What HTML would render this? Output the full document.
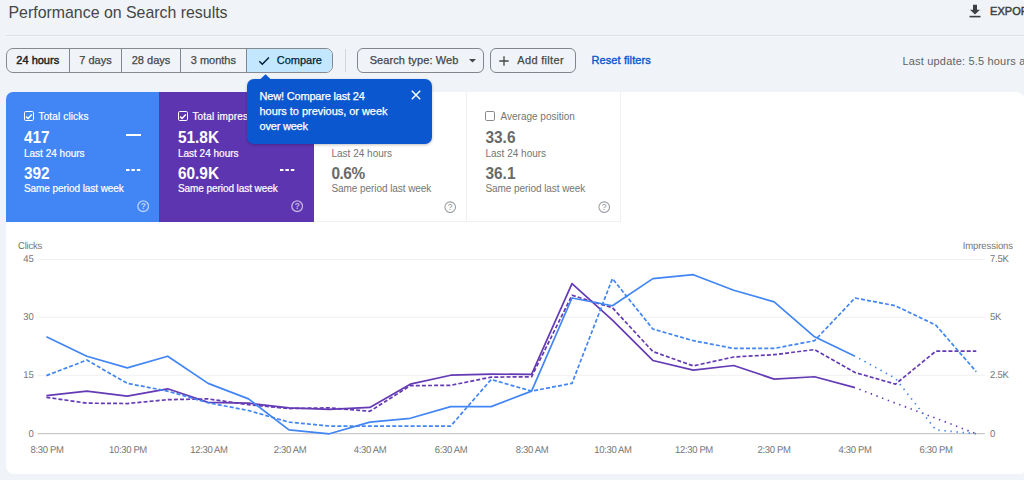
<!DOCTYPE html>
<html><head><meta charset="utf-8">
<style>
*{box-sizing:border-box;margin:0;padding:0}
html,body{width:1024px;height:480px;overflow:hidden}
body{background:#f0f4f9;font-family:"Liberation Sans",sans-serif;position:relative;color:#444746}
.abs{position:absolute;white-space:nowrap}
#title{left:8.5px;top:3px;font-size:15.9px;line-height:20px;color:#444746}
#hr{left:5.5px;top:35px;width:1019px;height:2px;background:linear-gradient(#dcdfe4 0 50%,#f4f7fb 50% 100%)}
#seg{left:5.5px;top:48px;width:327px;height:25px;border:1px solid #858a8f;border-radius:7px;overflow:hidden;background:#f0f4f9}
.sg{-webkit-text-stroke:0.25px currentColor;position:absolute;top:0;height:23px;line-height:23px;font-size:11px;text-align:center;color:#444746;border-right:1px solid #80868b}
.btn{-webkit-text-stroke:0.25px currentColor;position:absolute;top:48px;height:25px;border:1px solid #80868b;border-radius:6px;font-size:11px;line-height:23px;color:#444746}
#chartcard{left:5.5px;top:92px;width:1019px;height:382.4px;background:#fff;border-radius:8px 9px 5px 8px}
.card{position:absolute;top:92px;height:129.5px}
.card .lbl{position:absolute;font-size:10px;line-height:12px;margin-top:0.6px;white-space:nowrap}
.card .num{position:absolute;font-size:15.4px;line-height:16px;margin-top:0.9px;transform:scale(1.0,1.06);transform-origin:left bottom;font-weight:bold;white-space:nowrap}
.cb{position:absolute;width:10px;height:10px;border:1.25px solid #fff;border-radius:1.8px;margin-top:-0.5px;margin-left:-0.2px}
.help{position:absolute;width:12.4px;height:12.4px}
.yl{transform:rotate(0.03deg) scaleY(1.05);transform-origin:50% 82%;position:absolute;font-size:9.5px;line-height:10px;color:#757575;white-space:nowrap;letter-spacing:-0.2px}
.xl{transform:rotate(0.03deg) scaleY(1.05);transform-origin:50% 82%;position:absolute;top:444.9px;width:60px;text-align:center;font-size:9.5px;line-height:10px;color:#757575;white-space:nowrap;letter-spacing:-0.35px}
.wc .num{color:#696969}
.cc .lbl{-webkit-text-stroke:0.2px #fff}
</style></head><body>
<div id="title" class="abs">Performance on Search results</div>
<svg class="abs" style="left:969px;top:4px" width="12" height="14" viewBox="0 0 12 14"><path d="M4 0.8h4v5h3L6 10.6 1 5.8h3z" fill="#3c4043"/><rect x="0.5" y="11.8" width="11" height="1.6" fill="#3c4043"/></svg>
<div class="abs" style="left:990px;top:5px;font-size:11px;line-height:13px;color:#3c4043;letter-spacing:0.05px;-webkit-text-stroke:0.45px #3c4043">EXPORT</div>
<div id="hr" class="abs"></div>

<div id="seg" class="abs">
 <div class="sg" style="left:0;width:63.5px;color:#1f1f1f;-webkit-text-stroke:0.45px currentColor">24 hours</div>
 <div class="sg" style="left:63.5px;width:52px">7 days</div>
 <div class="sg" style="left:115.5px;width:59px">28 days</div>
 <div class="sg" style="left:174.5px;width:65.7px">3 months</div>
 <div class="sg" style="left:240.2px;width:86.8px;background:#c2e7ff;color:#001d35;border-right:none;text-align:left;padding-left:30px">Compare</div>
 <svg style="position:absolute;left:251px;top:7px" width="14" height="10" viewBox="0 0 14 10"><path d="M1.3 5.3 L4.3 8.2 L10.9 1.4" fill="none" stroke="#001d35" stroke-width="1.45"/></svg>
</div>
<div class="abs" style="left:345px;top:49px;width:1px;height:23px;background:#d3d7dc"></div>
<div class="btn" style="left:357px;width:127px;padding-left:11.7px;letter-spacing:0.09px">Search type: Web
 <svg style="position:absolute;left:111px;top:10px" width="7" height="4" viewBox="0 0 7 4"><path d="M0 0h7L3.5 3.6z" fill="#444746"/></svg></div>
<div class="btn" style="left:490px;width:86px;padding-left:26.3px;letter-spacing:0.32px">Add filter
 <svg style="position:absolute;left:8px;top:6.5px" width="10" height="10" viewBox="0 0 10 10"><path d="M5 0.3v9.4M0.3 5h9.4" stroke="#444746" stroke-width="1.3"/></svg></div>
<div class="abs" style="left:591.5px;top:54px;font-size:11px;line-height:13px;color:#0b57d0;letter-spacing:0.1px;-webkit-text-stroke:0.4px currentColor">Reset filters</div>
<div class="abs" style="left:902.5px;top:54.8px;font-size:11px;line-height:13px;color:#5f6368;letter-spacing:0.18px">Last update: 5.5 hours ago</div>

<div id="chartcard" class="abs"></div>

<!-- cards -->
<div class="card cc" style="left:5.5px;width:153.6px;background:#4285f4;border-radius:7px 0 0 0;color:#fff">
 <div class="cb" style="left:18.5px;top:19.5px"></div>
 <svg style="position:absolute;left:19.5px;top:20.5px" width="8" height="8" viewBox="0 0 8 8"><path d="M1.1 3.6 L3.1 5.5 L6.8 1.4" fill="none" stroke="#fff" stroke-width="1.45"/></svg>
 <div class="lbl" style="left:33.5px;top:18px"><span style="letter-spacing:0.14px;margin-left:-0.5px">Total clicks</span></div>
 <div class="num" style="left:18.5px;top:37px">417</div>
 <div class="abs" style="left:120.3px;top:41.8px;width:15.2px;height:1.9px;background:#fff"></div>
 <div class="lbl" style="left:18.5px;top:55px">Last 24 hours</div>
 <div class="num" style="left:18.5px;top:73px">392</div>
 <svg class="abs" style="left:120.3px;top:77.1px" width="15" height="2" viewBox="0 0 15 2"><path d="M0 0h3.5v1.9h-3.5zM5.4 0h3.5v1.9h-3.5zM10.8 0h3.5v1.9h-3.5z" fill="#fff"/></svg>
 <div class="lbl" style="left:18.5px;top:90px"><span style="letter-spacing:-0.07px">Same period last week</span></div>
 <svg class="help" style="left:131.2px;top:108.4px" viewBox="0 0 12.4 12.4"><circle cx="6.2" cy="6.2" r="5.35" fill="none" stroke="#b9d1fb" stroke-width="1.35"/><text x="6.2" y="9.1" font-size="8.4" font-weight="bold" text-anchor="middle" fill="#b9d1fb" font-family="Liberation Sans">?</text></svg>
</div>
<div class="card cc" style="left:159px;width:154.6px;background:#5e35b1;color:#fff">
 <div class="cb" style="left:18.95px;top:19.5px"></div>
 <svg style="position:absolute;left:19.95px;top:20.5px" width="8" height="8" viewBox="0 0 8 8"><path d="M1.1 3.6 L3.1 5.5 L6.8 1.4" fill="none" stroke="#fff" stroke-width="1.45"/></svg>
 <div class="lbl" style="left:33.95px;top:18px"><span style="letter-spacing:0.14px;margin-left:-0.5px">Total impressions</span></div>
 <div class="num" style="left:18.95px;top:37px">51.8K</div>
 <div class="lbl" style="left:18.95px;top:55px">Last 24 hours</div>
 <div class="num" style="left:18.95px;top:73px">60.9K</div>
 <svg class="abs" style="left:120.75px;top:77.1px" width="15" height="2" viewBox="0 0 15 2"><path d="M0 0h3.5v1.9h-3.5zM5.4 0h3.5v1.9h-3.5zM10.8 0h3.5v1.9h-3.5z" fill="#fff"/></svg>
 <div class="lbl" style="left:18.95px;top:90px"><span style="letter-spacing:-0.07px">Same period last week</span></div>
 <svg class="help" style="left:131.65px;top:108.4px" viewBox="0 0 12.4 12.4"><circle cx="6.2" cy="6.2" r="5.35" fill="none" stroke="#c3b3e4" stroke-width="1.35"/><text x="6.2" y="9.1" font-size="8.4" font-weight="bold" text-anchor="middle" fill="#c3b3e4" font-family="Liberation Sans">?</text></svg>
</div>
<div class="card wc" style="left:313.5px;width:153.5px;background:#fff;color:#757575;border-right:1px solid #eef0f2;border-bottom:1px solid #f0f1f3">
 <div class="lbl" style="left:18px;top:55px">Last 24 hours</div>
 <div class="num" style="left:18px;top:73px"><span style="letter-spacing:-0.5px">0.6%</span></div>
 <div class="lbl" style="left:18px;top:90px"><span style="letter-spacing:-0.07px">Same period last week</span></div>
 <svg class="help" style="left:130.9px;top:108.6px" viewBox="0 0 12.4 12.4"><circle cx="6.2" cy="6.2" r="5.3" fill="none" stroke="#979ba0" stroke-width="1.05"/><text x="6.2" y="9.1" font-size="8.4" text-anchor="middle" fill="#8a8e93" font-family="Liberation Sans">?</text></svg>
</div>
<div class="card wc" style="left:467px;width:154px;background:#fff;color:#757575;border-right:1px solid #eef0f2;border-bottom:1px solid #f0f1f3">
 <div class="cb" style="left:18.5px;top:19.5px;border-color:#8a8a8a"></div>
 <div class="lbl" style="left:33.5px;top:18px">Average position</div>
 <div class="num" style="left:18.5px;top:37px">33.6</div>
 <div class="lbl" style="left:18.5px;top:55px">Last 24 hours</div>
 <div class="num" style="left:18.5px;top:73px">36.1</div>
 <div class="lbl" style="left:18.5px;top:90px"><span style="letter-spacing:-0.07px">Same period last week</span></div>
 <svg class="help" style="left:130.9px;top:108.6px" viewBox="0 0 12.4 12.4"><circle cx="6.2" cy="6.2" r="5.3" fill="none" stroke="#979ba0" stroke-width="1.05"/><text x="6.2" y="9.1" font-size="8.4" text-anchor="middle" fill="#8a8e93" font-family="Liberation Sans">?</text></svg>
</div>

<!-- tooltip -->
<div class="abs" style="left:247px;top:79px;width:184.5px;height:65px;background:#0b57d0;border-radius:7px;box-shadow:0 1px 3px rgba(0,0,0,.25)"></div>
<svg class="abs" style="left:259px;top:74px" width="13" height="6" viewBox="0 0 13 6"><path d="M0.5 6 L6.5 0.3 L12.5 6z" fill="#0b57d0"/></svg>
<div class="abs" style="left:259.5px;top:88.8px;font-size:11px;line-height:15.2px;color:#fff;-webkit-text-stroke:0.25px #fff"><span style="letter-spacing:-0.18px">New! Compare last 24</span><br><span style="letter-spacing:-0.04px">hours to previous, or week</span><br><span style="letter-spacing:-0.2px">over week</span></div>
<svg class="abs" style="left:411px;top:89.5px" width="10" height="10" viewBox="0 0 10 10"><path d="M0.8 0.8 L9.2 9.2 M9.2 0.8 L0.8 9.2" stroke="#fff" stroke-width="1.5"/></svg>

<!-- chart -->
<div class="yl" style="left:17.8px;top:241.1px">Clicks</div>
<div class="yl" style="left:0;width:33.5px;text-align:right;top:254.4px">45</div>
<div class="yl" style="left:0;width:33.5px;text-align:right;top:312.4px">30</div>
<div class="yl" style="left:0;width:33.5px;text-align:right;top:370.4px">15</div>
<div class="yl" style="left:0;width:33.5px;text-align:right;top:429.1px">0</div>
<div class="yl" style="left:913px;width:100px;text-align:right;top:241.1px;letter-spacing:-0.08px">Impressions</div>
<div class="yl" style="left:990.3px;top:254.4px">7.5K</div>
<div class="yl" style="left:990.3px;top:312.4px">5K</div>
<div class="yl" style="left:990.3px;top:370.4px">2.5K</div>
<div class="yl" style="left:990.3px;top:429.1px">0</div>
<div class="xl" style="left:17.1px">8:30 PM</div><div class="xl" style="left:97.9px">10:30 PM</div><div class="xl" style="left:178.7px">12:30 AM</div><div class="xl" style="left:259.5px">2:30 AM</div><div class="xl" style="left:340.3px">4:30 AM</div><div class="xl" style="left:421.1px">6:30 AM</div><div class="xl" style="left:501.9px">8:30 AM</div><div class="xl" style="left:582.7px">10:30 AM</div><div class="xl" style="left:663.5px">12:30 PM</div><div class="xl" style="left:744.3px">2:30 PM</div><div class="xl" style="left:825.1px">4:30 PM</div><div class="xl" style="left:905.9px">6:30 PM</div>
<svg class="abs" style="left:0;top:0" width="1024" height="480" viewBox="0 0 1024 480">
 <g stroke="#f1f1f1" stroke-width="1">
  <line x1="37.5" x2="985" y1="259.4" y2="259.4"/>
  <line x1="37.5" x2="985" y1="317.3" y2="317.3"/>
  <line x1="37.5" x2="985" y1="375.3" y2="375.3"/>
 </g>
 <line x1="37.5" x2="985" y1="433.7" y2="433.7" stroke="#bdbdbd" stroke-width="1"/>
 <g fill="none" stroke-width="1.7" stroke-linejoin="round">
  <path d="M46.4,397.33 L86.83,403.15 L127.26,403.54 L167.69,399.66 L208.12,398.88 L248.55,404.7 L288.98,408.58 L329.41,407.8 L369.84,411.3 L410.27,385.69 L450.7,385.3 L491.13,377.15 L531.56,376.76 L571.99,295.28 L612.42,307.7 L652.85,351.54 L693.28,365.9 L733.71,356.98 L774.14,354.65 L814.57,349.6 L855.0,372.5 L895.43,384.14 L935.86,351.16 L976.29,351.16" stroke="#643ab5" stroke-dasharray="4 2.1"/>
  <path d="M46.4,395.66 L86.83,391.12 L127.26,396.16 L167.69,388.79 L208.12,402.37 L248.55,403.15 L288.98,407.8 L329.41,409.36 L369.84,407.42 L410.27,384.14 L450.7,375.21 L491.13,374.05 L531.56,374.44 L571.99,283.64 L612.42,320.12 L652.85,360.47 L693.28,370.17 L733.71,365.51 L774.14,379.09 L814.57,376.76 L855.0,387.63" stroke="#643ab5"/>
  <path d="M855.0,387.63 L895.43,403.15 L935.86,418.28 L976.29,433.8" stroke="#643ab5" stroke-dasharray="1.4 4.68" stroke-dashoffset="1.4"/>
  <path d="M46.4,375.6 L86.83,360.08 L127.26,383.36 L167.69,391.12 L208.12,402.76 L248.55,410.52 L288.98,422.16 L329.41,426.04 L369.84,426.04 L410.27,426.04 L450.7,426.04 L491.13,379.48 L531.56,391.12 L571.99,383.36 L612.42,278.6 L652.85,329.04 L693.28,340.68 L733.71,348.44 L774.14,348.44 L814.57,340.68 L855.0,298.0 L895.43,305.76 L935.86,325.16 L976.29,371.72" stroke="#4285f4" stroke-dasharray="4 2.1"/>
  <path d="M46.4,336.8 L86.83,356.2 L127.26,367.84 L167.69,356.2 L208.12,383.36 L248.55,398.88 L288.98,429.92 L329.41,433.8 L369.84,422.16 L410.27,418.28 L450.7,406.64 L491.13,406.64 L531.56,391.12 L571.99,298.0 L612.42,305.76 L652.85,278.6 L693.28,274.72 L733.71,290.24 L774.14,301.88 L814.57,336.8 L855.0,356.2" stroke="#4285f4"/>
  <path d="M855.0,356.2 L895.43,378.32 L935.86,429.92 L976.29,433.8" stroke="#4285f4" stroke-dasharray="1.4 4.68" stroke-dashoffset="1.4"/>
 </g>
</svg>
</body></html>
